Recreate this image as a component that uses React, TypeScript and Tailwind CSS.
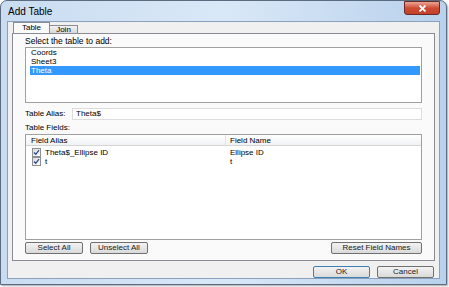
import React from 'react';

const font = { fontFamily: '"Liberation Sans", Arial, sans-serif' };

const Check: React.FC = () => (
  <div className="w-[9px] h-[9px] border border-[#8e8f8f] bg-gradient-to-br from-[#dcdcdc] to-white flex items-center justify-center">
    <svg width="7" height="7" viewBox="0 0 7 7">
      <path d="M1 3.5 L2.8 5.3 L6 1.2" stroke="#2a4a8a" strokeWidth="1.3" fill="none" />
    </svg>
  </div>
);

const Btn: React.FC<{ label: string; w: string; focus?: boolean }> = ({ label, w, focus }) => (
  <button
    className={`${w} h-[12px] rounded-[2px] border ${focus ? 'border-[#3c7fb1]' : 'border-[#707070]'} bg-gradient-to-b from-[#f2f2f2] to-[#dadada] text-[8px] leading-none text-[#222] flex items-center justify-center`}
  >
    {label}
  </button>
);

const App: React.FC = () => {
  const tables = ['Coords', 'Sheet3', 'Theta'];
  const fields = [
    { alias: 'Theta$_Ellipse ID', name: 'Ellipse ID' },
    { alias: 't', name: 't' },
  ];

  return (
    <div className="w-[449px] h-[287px] bg-white overflow-hidden" style={font}>
      <div className="w-[447px] h-[285px] rounded-t-[7px] border border-[#5b6b80] bg-gradient-to-r from-[#c9dcf1] via-[#d9e8f7] to-[#b9d1ec] shadow-[1px_1px_2px_rgba(0,0,0,0.35)] flex flex-col px-[6px] pb-[5px]">
        {/* Title bar */}
        <div className="h-[20px] flex items-center justify-between shrink-0">
          <span className="text-[10px] text-black pl-[1px]">Add Table</span>
          <div className="w-[36px] h-[14px] mt-[-6px] rounded-b-[3px] border border-[#6b2b24] bg-gradient-to-b from-[#e8a597] via-[#cf4b33] to-[#c1412c] flex items-center justify-center">
            <svg width="9" height="7" viewBox="0 0 9 7">
              <path d="M1.5 0.5 L7.5 6.5 M7.5 0.5 L1.5 6.5" stroke="white" strokeWidth="1.8" />
            </svg>
          </div>
        </div>

        {/* Client area */}
        <div className="flex-1 border border-[#8aa0bd] bg-[#f0f0f0] flex flex-col px-[4px]">
          {/* Tabs */}
          <div className="flex items-end h-[11px] pl-[1px]">
            <div className="w-[37px] h-[11px] border border-b-0 border-[#898c95] bg-[#fafafa] text-[8px] leading-[10px] text-black text-center">
              Table
            </div>
            <div className="w-[28px] h-[8px] border border-l-0 border-b-0 border-[#898c95] bg-gradient-to-b from-[#f2f2f2] to-[#d9d9d9] text-[8px] leading-[8px] text-black text-center">
              Join
            </div>
          </div>

          {/* Tab panel */}
          <div className="h-[228px] border border-[#898c95] bg-[#fafafa] flex flex-col px-[12px] pt-[2px]">
            <div className="text-[8.5px] leading-[11px] text-black">Select the table to add:</div>
            <div className="h-[56px] border border-[#a0a0a0] bg-white pl-[4px] pr-[1px]">
              {tables.map((t) => (
                <div
                  key={t}
                  className={`h-[9px] text-[8px] leading-[9px] pl-[1px] ${t === 'Theta' ? 'bg-[#3399ff] text-white' : 'text-black'}`}
                >
                  {t}
                </div>
              ))}
            </div>

            <div className="flex items-center mt-[5px] h-[12px]">
              <span className="text-[8px] text-black w-[47px]">Table Alias:</span>
              <div className="flex-1 h-[12px] border border-[#dcdcdc] bg-white text-[8px] leading-[10px] pl-[3px] text-black">
                Theta$
              </div>
            </div>

            <div className="text-[8px] leading-[10px] text-black mt-[3px]">Table Fields:</div>
            <div className="h-[106px] border border-[#a0a0a0] bg-white mt-[1px]">
              <div className="flex h-[11px] bg-gradient-to-b from-white to-[#f1f2f4] border-b border-[#d5d5d5] text-[8px] leading-[11px] text-black">
                <div className="w-[200px] pl-[5px] border-r border-[#e3e3e3]">Field Alias</div>
                <div className="pl-[4px]">Field Name</div>
              </div>
              <div className="pt-[2px]">
                {fields.map((f) => (
                  <div key={f.alias} className="flex h-[9px] items-center text-[8px] leading-[9px] text-black">
                    <div className="w-[200px] flex items-center pl-[6px] gap-[4px]">
                      <Check />
                      <span>{f.alias}</span>
                    </div>
                    <div className="pl-[4px]">{f.name}</div>
                  </div>
                ))}
              </div>
            </div>

            <div className="flex justify-between mt-[2px]">
              <div className="flex gap-[7px]">
                <Btn label="Select All" w="w-[58px]" />
                <Btn label="Unselect All" w="w-[58px]" />
              </div>
              <Btn label="Reset Field Names" w="w-[91px]" />
            </div>
          </div>

          {/* Footer */}
          <div className="flex justify-end gap-[7px] mt-[5px] pr-[1px]">
            <Btn label="OK" w="w-[57px]" focus />
            <Btn label="Cancel" w="w-[57px]" />
          </div>
        </div>
      </div>
    </div>
  );
};

export default App;
